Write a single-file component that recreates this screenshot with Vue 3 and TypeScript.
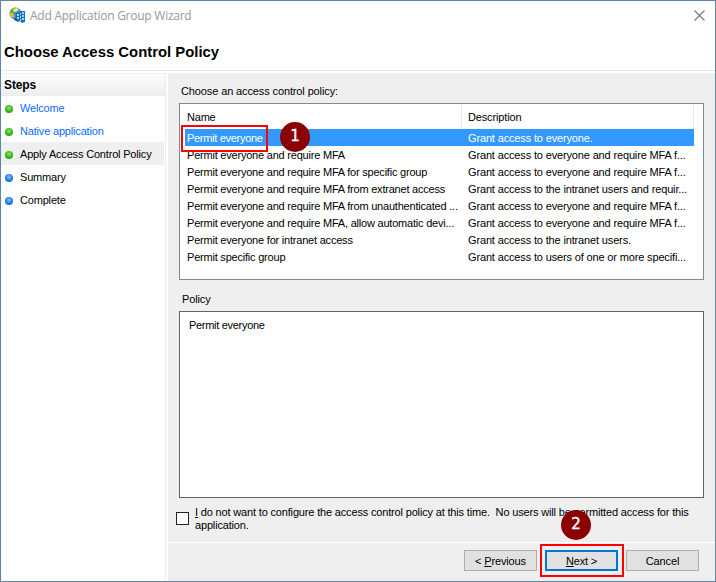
<script setup lang="ts">
interface Step { label: string; state: 'done' | 'todo'; link?: boolean; current?: boolean }
interface Policy { name: string; description: string; selected?: boolean }

const steps: Step[] = [
  { label: 'Welcome', state: 'done', link: true },
  { label: 'Native application', state: 'done', link: true },
  { label: 'Apply Access Control Policy', state: 'done', current: true },
  { label: 'Summary', state: 'todo' },
  { label: 'Complete', state: 'todo' },
]

const policies: Policy[] = [
  { name: 'Permit everyone', description: 'Grant access to everyone.', selected: true },
  { name: 'Permit everyone and require MFA', description: 'Grant access to everyone and require MFA f...' },
  { name: 'Permit everyone and require MFA for specific group', description: 'Grant access to everyone and require MFA f...' },
  { name: 'Permit everyone and require MFA from extranet access', description: 'Grant access to the intranet users and requir...' },
  { name: 'Permit everyone and require MFA from unauthenticated ...', description: 'Grant access to everyone and require MFA f...' },
  { name: 'Permit everyone and require MFA, allow automatic devi...', description: 'Grant access to everyone and require MFA f...' },
  { name: 'Permit everyone for intranet access', description: 'Grant access to the intranet users.' },
  { name: 'Permit specific group', description: 'Grant access to users of one or more specifi...' },
]
</script>

<template>
  <div class="window">
    <header class="titlebar">
      <svg class="app-icon" width="17" height="17" viewBox="0 0 17 17">
        <circle cx="6.5" cy="6.5" r="6" fill="#2f8fd0" />
        <path d="M1 5Q2.500 1 7 .5L9 2 6 4 5 6 2 7Z" fill="#65b82e" />
        <path d="M4 2L8 1 10 3 7 5 5 5Z" fill="#e8e878" />
        <path d="M.5 6L4 6 5.500 9 4 11 1.500 9.500Z" fill="#ffb52b" />
        <path d="M4 11L8 12 9 15 6 13.500Z" fill="#174f9c" />
        <path d="M7 6L11 5V4H16V15L13 16 11 14 9 15 7 12Z" fill="#1672b8" />
        <path d="M8 7h2v2H8zm3-1h1v2h-1zm2-1h2v2h-2zM8 10h2v2H8zm3-1h1v2h-1zm2-1h2v2h-2zm-2 4h1v2h-1zm2-1h2v2h-2z" fill="#9bd4fa" />
      </svg>
      <span class="title">Add Application Group Wizard</span>
      <svg class="close" width="11" height="11" viewBox="0 0 11 11"><path d="M.5.5l10 10M10.5.5l-10 10" stroke="#777" stroke-width="1.1" /></svg>
    </header>
    <h1><span>Choose Access Control Policy</span></h1>
    <div class="body">
      <nav>
        <h2>Steps</h2>
        <div v-for="s in steps" :key="s.label" class="step" :class="{ current: s.current, link: s.link }">
          <i class="dot" :class="s.state"></i><span>{{ s.label }}</span>
        </div>
      </nav>
      <main>
        <section class="content">
          <div class="label">Choose an access control policy:</div>
          <div class="list">
            <div class="row head"><span class="name">Name</span><span class="desc">Description</span></div>
            <div v-for="p in policies" :key="p.name" class="row" :class="{ selected: p.selected }">
              <span class="name">{{ p.name }}</span><span class="desc">{{ p.description }}</span>
            </div>
            <div class="mark mark-row"></div>
            <div class="badge badge-row">1</div>
          </div>
          <div class="label second">Policy</div>
          <div class="policy">Permit everyone</div>
          <label class="skip">
            <span class="box"></span>
            <span class="skip-text"><u>I</u> do not want to configure the access control policy at this time.&nbsp; No users will be permitted access for this<br>application.</span>
          </label>
        </section>
        <footer>
          <button>&lt; <u>P</u>revious</button>
          <button class="primary"><u>N</u>ext &gt;</button>
          <button>Cancel</button>
          <div class="mark mark-next"></div>
          <div class="badge badge-next">2</div>
        </footer>
      </main>
    </div>
  </div>
</template>

<style>
body { margin: 0; }
</style>

<style scoped>
* { box-sizing: border-box; }
.window { width: 716px; height: 582px; border: 1px solid #5f84a5; background: #fff; display: flex; flex-direction: column; font: 11px/13px "Liberation Sans", Arial, sans-serif; letter-spacing: -0.18px; color: #000; overflow: hidden; white-space: nowrap; }
.titlebar { height: 30px; display: flex; align-items: center; padding: 0 10px 0 8px; flex: none; }
.app-icon { margin-top: -1px; }
.title { font: 12px/16px "Open Sans", sans-serif; color: #999; margin-left: 4px; letter-spacing: -0.25px; }
.close { margin: -2px 0 0 auto; }
h1 { margin: 0; height: 40px; flex: none; padding: 13px 0 0 3px; font-size: 14px; line-height: 16px; font-weight: bold; letter-spacing: 0; border-bottom: 1px solid #e8e8e8; }
h1 span { display: inline-block; transform: scaleX(1.062); transform-origin: left; }
.body { flex: 1; display: flex; padding-top: 2px; min-height: 0; }
nav { width: 165px; border-top: 1px solid #f0f0f0; border-right: 1px solid #ececec; }
h2 { margin: 0; height: 22px; padding: 5px 3px; font-size: 12px; line-height: 13px; letter-spacing: -0.1px; background: linear-gradient(#fdfdfd, #ededed); }
.step { height: 23px; display: flex; align-items: center; padding-left: 4px; margin-right: 1px; }
.step span { padding-top: 2px; }
.step.link { color: #0a6cff; }
.step.current { background: #efefef; }
.dot { width: 8px; height: 8px; border-radius: 50%; margin: 2px 7px 0 0; }
.dot.done { background: radial-gradient(circle at 4px 3px, #8ee866 0, #36b91e 50%, #24900f 100%); }
.dot.todo { background: radial-gradient(circle at 4px 3px, #8cc4ff 0, #1f80f0 50%, #0a56c0 100%); }
main { flex: 1; margin-left: 2px; background: #efefef; display: flex; flex-direction: column; min-width: 0; }
.content { flex: 1; padding: 12px 11px 0 11px; border-bottom: 1px solid #fff; }
.label { height: 18px; padding-left: 2px; letter-spacing: -0.12px; }
.list { position: relative; height: 177px; border: 1px solid #828790; background: #fff; padding: 1px 9px 0 5px; }
.row { display: flex; height: 17px; line-height: 19px; letter-spacing: -0.21px; }
.row.head { height: 24px; line-height: 25px; }
.row.selected { background: #3399ff; color: #fff; }
.row.selected .name { letter-spacing: -0.3px; }
.name { width: 277px; flex: none; padding-left: 2px; }
.desc { flex: 1; padding-left: 6px; letter-spacing: -0.15px; }
.head .name, .head .desc { border-right: 1px solid #e4e4e4; }
.label.second { height: 31px; padding-top: 13px; padding-left: 3px; }
.policy { height: 187px; border: 1px solid #646464; background: #fff; padding: 7px 9px; letter-spacing: -0.3px; }
.skip { display: flex; align-items: center; margin: 8px 0 0 -3px; }
.box { width: 13px; height: 13px; flex: none; border: 1px solid #222; background: #fff; margin: -1px 6px 0 0; }
.skip-text { letter-spacing: -0.165px; }
footer { position: relative; height: 38px; flex: none; display: flex; justify-content: flex-end; gap: 8px; padding: 7px 16px 0 0; }
button { width: 73px; height: 21px; padding: 2px 0 0; font: inherit; letter-spacing: -0.15px; color: #000; background: #e1e1e1; border: 1px solid #adadad; border-radius: 0; }
button.primary { border: 2px solid #0078d7; }
.mark { position: absolute; border: 2px solid #f00; }
.mark-row { left: 1px; top: 21px; width: 87px; height: 27px; }
.mark-next { right: 91px; top: 1px; width: 84px; height: 33px; }
.badge { position: absolute; width: 30px; height: 30px; border-radius: 50%; background: #8b0000; color: #fff; font: 15px/29px "DejaVu Sans", sans-serif; letter-spacing: 0; -webkit-text-stroke: 0.4px #fff; text-align: center; }
.badge-row { left: 100px; top: 18px; }
.badge-next { right: 124px; top: -33px; }
</style>
